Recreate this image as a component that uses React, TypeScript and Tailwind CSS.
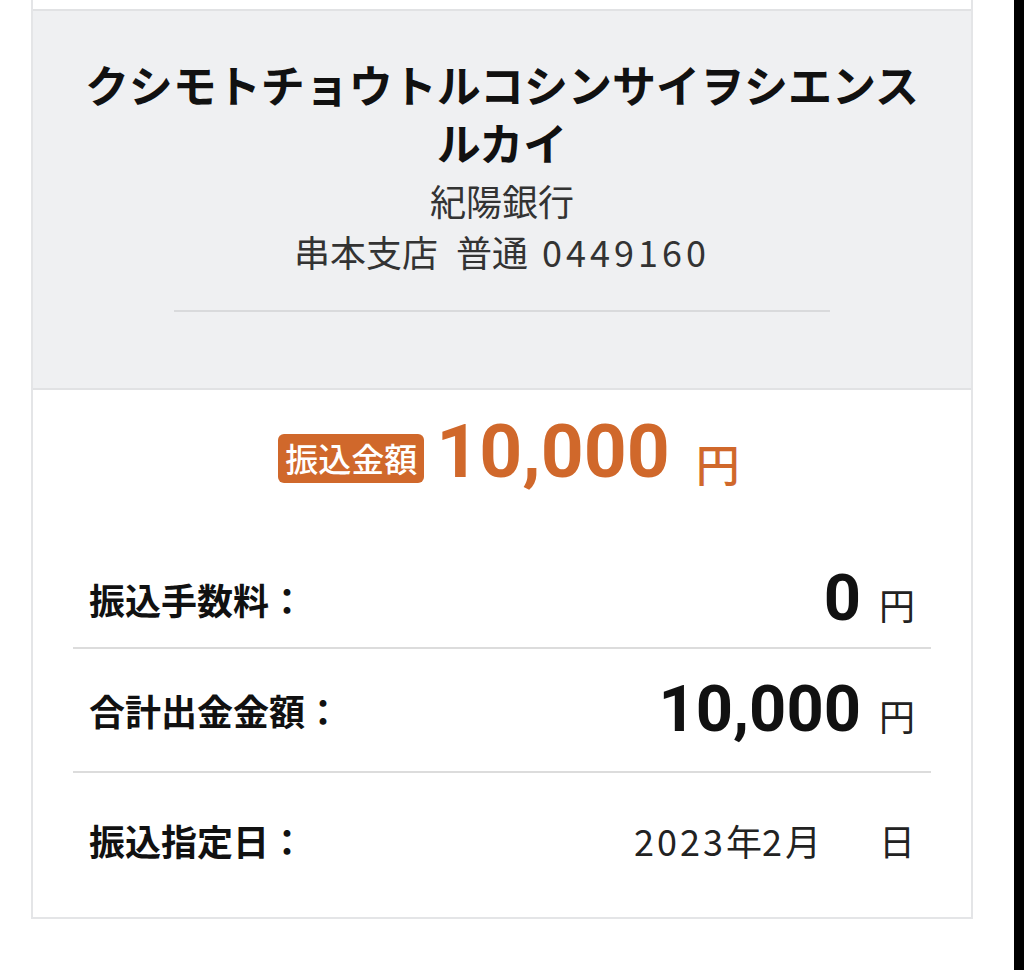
export default function App() {
  return (
    <div className="w-[1024px] h-[970px] bg-white flex overflow-hidden font-['Noto_Sans_CJK_JP',sans-serif]">
      <div className="flex-1">
        <div className="ml-[31px] w-[942px] border-x-2 border-b-2 border-[#e4e5e7] bg-white">
          <div className="h-[9px]" />
          <div className="bg-[#eff0f2] border-y-2 border-[#e1e2e4] pt-[44px] pb-[76px] px-[40px] flex flex-col items-center text-center">
            <h1 className="text-[44px] leading-[58px] font-bold text-[#111]">
              クシモトチョウトルコシンサイヲシエンスルカイ
            </h1>
            <p className="text-[36px] leading-[51px] text-[#333] mt-[4px]">紀陽銀行</p>
            <p className="text-[36px] leading-[51px] text-[#333] flex items-baseline">
              <span>串本支店</span>
              <span className="ml-[18px]">普通</span>
              <span className="ml-[14px] tracking-[4px]">0449160</span>
            </p>
            <div className="mt-[33px] w-[656px] h-[2px] bg-[#d9dadc]" />
          </div>
          <div className="px-[40px] pt-[24px]">
            <div className="flex items-start justify-center pl-[14px]">
              <div className="mt-[20px] h-[49px] px-[7px] rounded-[6px] bg-[#d0682b] text-white text-[33px] leading-[49px] font-medium">
                振込金額
              </div>
              <div className="ml-[12px] text-[75px] leading-none font-bold text-[#d0682b] font-['Roboto',sans-serif]">
                10,000
              </div>
              <div className="ml-[26px] mt-[27px] text-[44px] leading-none font-medium text-[#d0682b]">円</div>
            </div>
            <div className="mt-[62px] h-[98px] border-b-2 border-[#dcdcdc] px-[16px] flex items-center justify-between">
              <span className="text-[36px] font-bold text-[#111]">振込手数料：</span>
              <span className="flex items-baseline">
                <span className="text-[65px] font-bold text-[#111] font-['Roboto',sans-serif]">0</span>
                <span className="ml-[18px] text-[36px] text-[#222]">円</span>
              </span>
            </div>
            <div className="h-[124px] border-b-2 border-[#dcdcdc] px-[16px] flex items-center justify-between">
              <span className="text-[36px] font-bold text-[#111]">合計出金金額：</span>
              <span className="flex items-baseline">
                <span className="text-[65px] font-bold text-[#111] font-['Roboto',sans-serif]">10,000</span>
                <span className="ml-[18px] text-[36px] text-[#222]">円</span>
              </span>
            </div>
            <div className="h-[134px] px-[16px] flex items-center justify-between">
              <span className="text-[36px] font-bold text-[#111]">振込指定日：</span>
              <span className="flex items-baseline text-[36px] text-[#222]">
                <span className="tracking-[3px]">2023</span>
                <span>年</span>
                <span className="tracking-[3px]">2</span>
                <span>月</span>
                <span className="w-[58px]" />
                <span>日</span>
              </span>
            </div>
            <div className="h-[10px]" />
          </div>
        </div>
      </div>
      <div className="w-[10px] bg-black" />
    </div>
  );
}
